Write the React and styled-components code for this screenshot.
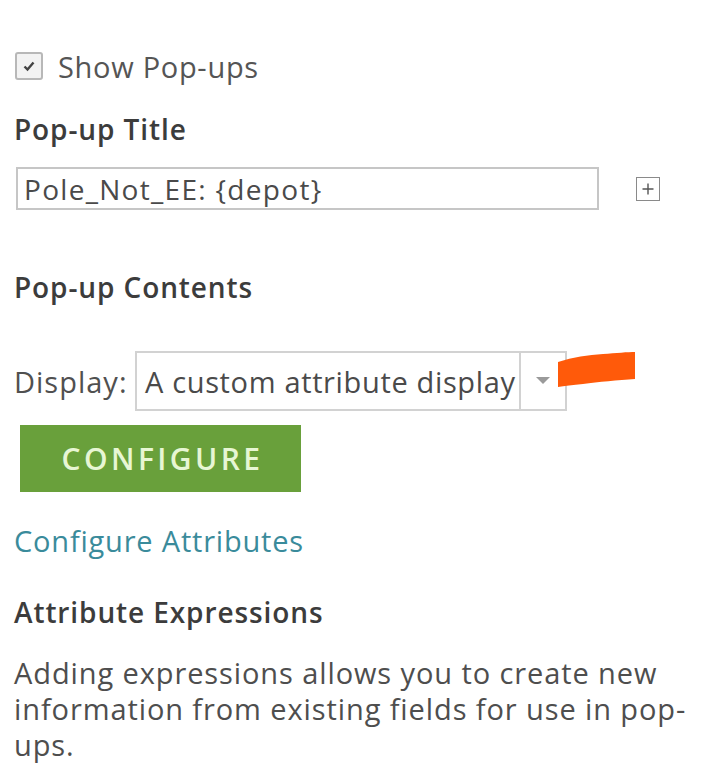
import React from "react";
import styled, { createGlobalStyle } from "styled-components";

const Global = createGlobalStyle`
  html, body { margin: 0; padding: 0; background: #fff; height: 765px; overflow: hidden; }
  body { font-family: "Open Sans", "Noto Sans", sans-serif; color: #4c4c4c; }
`;

const Panel = styled.div`
  width: 720px;
  padding: 50px 0 0 14px;
  box-sizing: border-box;
  display: flex;
  flex-direction: column;
  align-items: flex-start;
`;

const CheckRow = styled.label`
  display: flex;
  align-items: center;
  gap: 15px;
  font-size: 29px;
  letter-spacing: 0.7px;
  color: #555;
  height: 32px;
  margin-left: 1px;
`;

const Box = styled.span`
  width: 24px;
  height: 24px;
  border: 2px solid #b8b8b8;
  border-radius: 3px;
  display: flex;
  align-items: center;
  justify-content: center;
  background: #f3f3f3;
`;

const Heading = styled.h2`
  margin: ${(p) => p.$mt}px 0 0;
  font-size: 28px;
  font-weight: 600;
  color: #3c3c3c;
  line-height: 34px;
  letter-spacing: 0.9px;
`;

const TitleRow = styled.div`
  display: flex;
  align-items: center;
  margin-top: 21px;
  margin-left: 2px;
`;

const TextInput = styled.div`
  width: 583px;
  height: 43px;
  box-sizing: border-box;
  border: 2px solid #c6c6c6;
  padding: 0 6px;
  display: flex;
  align-items: center;
  font-size: 28px;
  color: #4a4a4a;
  letter-spacing: 1.3px;
  white-space: nowrap;
`;

const PlusBox = styled.span`
  width: 24px;
  height: 24px;
  margin-left: 37px;
  border: 1.5px solid #8a8a8a;
  box-sizing: border-box;
  display: flex;
  align-items: center;
  justify-content: center;
`;

const DisplayRow = styled.div`
  display: flex;
  align-items: flex-start;
  margin-top: 47px;
`;

const DisplayLabel = styled.span`
  font-size: 29px;
  color: #505050;
  width: 121px;
  height: 60px;
  display: flex;
  align-items: center;
  letter-spacing: 1px;
`;

const Select = styled.div`
  width: 432px;
  height: 60px;
  box-sizing: border-box;
  border: 2px solid #d2d2d2;
  display: flex;
  align-items: stretch;
`;

const SelectText = styled.span`
  flex: 1;
  display: flex;
  align-items: center;
  padding-left: 8px;
  font-size: 29px;
  color: #4a4a4a;
  letter-spacing: 0.65px;
  white-space: nowrap;
`;

const SelectArrow = styled.span`
  width: 44px;
  border-left: 2px solid #d2d2d2;
  display: flex;
  align-items: center;
  justify-content: center;
`;

const Marker = styled.span`
  display: block;
  width: 78px;
  height: 37px;
  margin-left: -9px;
`;

const Button = styled.button`
  margin-top: 14px;
  margin-left: 6px;
  width: 281px;
  height: 67px;
  flex-shrink: 0;
  border: none;
  background: #69a03b;
  color: #e7f6d4;
  font-family: "Open Sans", "Noto Sans", sans-serif;
  font-size: 30px;
  font-weight: 600;
  letter-spacing: 3.4px;
  padding: 0 0 0 4px;
`;

const Link = styled.a`
  margin-top: 31px;
  font-size: 29px;
  color: #3a8b9b;
  text-decoration: none;
  line-height: 36px;
  letter-spacing: 0.8px;
`;

const Paragraph = styled.p`
  margin: 26px 0 0;
  font-size: 29px;
  line-height: 36px;
  color: #4e4e4e;
  width: 700px;
  letter-spacing: 0.9px;
`;

export default function App() {
  return (
    <>
      <Global />
      <Panel>
        <CheckRow>
          <Box>
            <svg width="14" height="12" viewBox="0 0 14 12">
              <path d="M2.5 6.5 L5.5 9.5 L11.5 2.5" fill="none" stroke="#444" strokeWidth="2.4" />
            </svg>
          </Box>
          Show Pop-ups
        </CheckRow>
        <Heading $mt={30}>Pop-up Title</Heading>
        <TitleRow>
          <TextInput>Pole_Not_EE: {"{depot}"}</TextInput>
          <PlusBox>
            <svg width="16" height="16" viewBox="0 0 16 16">
              <path d="M8 2.5 V13.5 M2.5 8 H13.5" stroke="#555" strokeWidth="1.4" />
            </svg>
          </PlusBox>
        </TitleRow>
        <Heading $mt={60}>Pop-up Contents</Heading>
        <DisplayRow>
          <DisplayLabel>Display:</DisplayLabel>
          <Select>
            <SelectText>A custom attribute display</SelectText>
            <SelectArrow>
              <svg width="14" height="8" viewBox="0 0 14 8">
                <path d="M0 0 H14 L7 7 Z" fill="#9a9a9a" />
              </svg>
            </SelectArrow>
          </Select>
          <Marker>
            <svg width="78" height="37" viewBox="0 0 78 37">
              <path d="M0 11 C15 6, 30 4, 45 3 C58 2, 70 1, 77 1 L77 28 C60 29, 40 31, 25 33 C15 34, 6 35, 0 36 Z" fill="#ff5a0a" />
            </svg>
          </Marker>
        </DisplayRow>
        <Button>CONFIGURE</Button>
        <Link href="#">Configure Attributes</Link>
        <Heading $mt={36}>Attribute Expressions</Heading>
        <Paragraph>
          Adding expressions allows you to create new information from existing fields for use in pop-ups.
        </Paragraph>
      </Panel>
    </>
  );
}
